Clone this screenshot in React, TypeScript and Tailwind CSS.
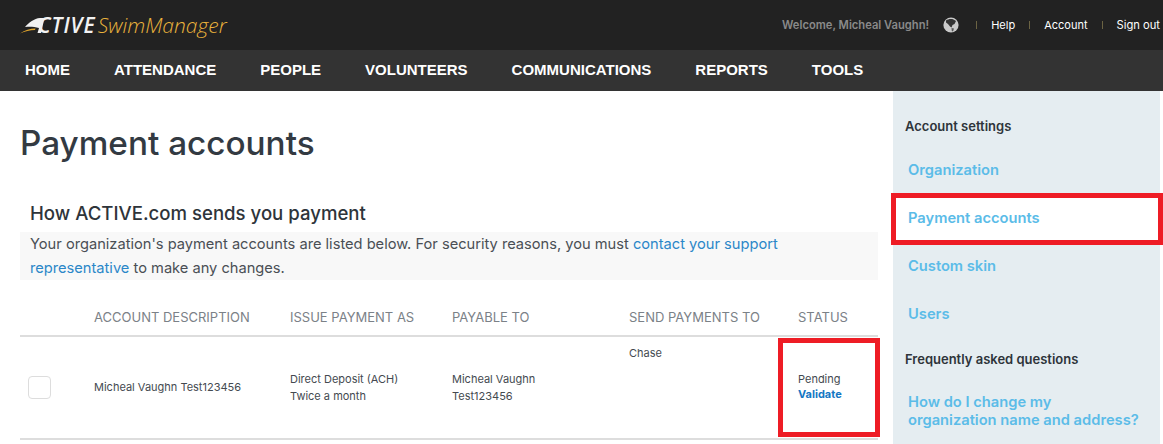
import React from "react";

const navItems = ["HOME", "ATTENDANCE", "PEOPLE", "VOLUNTEERS", "COMMUNICATIONS", "REPORTS", "TOOLS"];
const body = { fontFamily: '"Inter", "Liberation Sans", sans-serif' };

function Globe() {
  return (
    <svg width="16" height="16" viewBox="0 0 16 16" className="ml-[14px] mr-[17px]">
      <circle cx="8" cy="8" r="7.6" fill="#c9c9c9" />
      <path d="M3 3.5 C5 2 8 1.6 10.5 2.4 L13 4 L11.5 7 L9.5 8 L8.5 10.5 L7 9.5 L5 7 L3 5.5 Z" fill="#333" />
      <path d="M8.5 11 L11 11.5 L10 14.4 L8.8 14 Z" fill="#555" />
    </svg>
  );
}

function Logo() {
  return (
    <div className="relative flex h-[24px] w-[210px] items-center leading-none">
      <svg width="30" height="20" viewBox="0 0 30 20" className="absolute left-0 top-[2px]">
        <path d="M5 12 C9 7.5 14 3.5 20 3 L24.5 3 L21 18 L17.5 18 L19 13 C14 11.5 9 11.5 5 12 Z" fill="#f2f2f2" />
        <path d="M0 18.5 C5 15 10 13.5 15.5 13.5 L15 15 C10 15 5 16.5 0 18.5 Z" fill="#e0a42c" />
      </svg>
      <span className="ml-[18px] text-[21px] font-semibold italic tracking-[1px] text-[#f2f2f2]" style={{ fontFamily: '"Open Sans", sans-serif' }}>
        CTIVE
      </span>
      <span className="ml-[2px] text-[21px] font-light italic text-[#eab23c]" style={{ fontFamily: '"Open Sans", sans-serif' }}>
        SwimManager
      </span>
    </div>
  );
}

function SideLink({ children, active }: { children: React.ReactNode; active?: boolean }) {
  return (
    <a className={active ? "flex h-[48px] items-center bg-white pl-[15px] text-[14.7px] font-semibold text-[#5bbce8]" : "flex h-[48px] items-center pl-[15px] text-[14.7px] font-semibold text-[#5bbce8]"}>
      {children}
    </a>
  );
}

export default function App() {
  return (
    <div className="relative h-[444px] w-[1163px] overflow-hidden bg-white" style={body}>
      <header className="flex h-[50px] items-center justify-between bg-[#222222] pl-[20px] pr-[3px]">
        <Logo />
        <div className="flex items-center text-[11px] text-white">
          <span className="text-[11.2px] font-semibold text-[#8a8a8a]">Welcome, Micheal Vaughn!</span>
          <Globe />
          <span className="h-[8px] w-px bg-[#6b6343]" />
          <a className="mx-[14px]">Help</a>
          <span className="h-[8px] w-px bg-[#6b6343]" />
          <a className="mx-[14px]">Account</a>
          <span className="h-[8px] w-px bg-[#6b6343]" />
          <a className="ml-[14px] text-[11.2px]">Sign out</a>
        </div>
      </header>

      <nav className="flex h-[41px] items-center gap-[44px] bg-[#333333] pl-[25px] text-[15px] font-bold text-white" style={{ fontFamily: '"Liberation Sans", sans-serif' }}>
        {navItems.map((n) => (
          <a key={n}>{n}</a>
        ))}
      </nav>

      <div className="flex">
        <main className="w-[893px] pl-[20px] pr-[15px]">
          <h1 className="mt-[30px] text-[33.3px] font-medium leading-[44px] text-[#333a42]">Payment accounts</h1>
          <h2 className="mt-[36px] pl-[10px] text-[18.6px] font-medium leading-[24px] text-[#2e343a]">How ACTIVE.com sends you payment</h2>
          <div className="mt-[7px] h-[48px] bg-[#f8f8f8] pl-[10px] text-[14.65px] leading-[24px] text-[#4a4f55]">
            <p>
              Your organization's payment accounts are listed below. For security reasons, you must{" "}
              <a className="text-[#2b87c8]">contact your support</a>
            </p>
            <p>
              <a className="text-[#2b87c8]">representative</a> to make any changes.
            </p>
          </div>
          <div className="mt-[20px] grid h-[37px] grid-cols-[74px_196px_162px_177px_169px_80px] items-center border-b-2 border-[#dddddd] text-[13px] text-[#7b8187]">
            <span />
            <span>ACCOUNT DESCRIPTION</span>
            <span>ISSUE PAYMENT AS</span>
            <span>PAYABLE TO</span>
            <span>SEND PAYMENTS TO</span>
            <span>STATUS</span>
          </div>
          <div className="grid h-[103px] grid-cols-[74px_196px_162px_177px_169px_80px] items-center border-b-2 border-[#dddddd] text-[11px] leading-[17px] text-[#444a50]">
            <span className="ml-[8px] h-[23px] w-[23px] rounded-[4px] border border-[#dddddd] bg-white" />
            <span>Micheal Vaughn Test123456</span>
            <span>Direct Deposit (ACH)<br />Twice a month</span>
            <span>Micheal Vaughn<br />Test123456</span>
            <span className="mb-[69px]">Chase</span>
            <span className="mb-[2px] leading-[15px]">Pending<br /><a className="font-bold text-[#1477c4]">Validate</a></span>
          </div>
        </main>

        <aside className="h-[353px] w-[267px] bg-[#e5edf1] pt-[26px]">
          <h3 className="pl-[12px] text-[13px] font-semibold leading-[18px] text-[#2e343a]">Account settings</h3>
          <div className="mt-[11px]">
            <SideLink>Organization</SideLink>
            <SideLink active>Payment accounts</SideLink>
            <SideLink>Custom skin</SideLink>
            <SideLink>Users</SideLink>
          </div>
          <h3 className="mt-[12px] pl-[12px] text-[13px] font-semibold leading-[18px] text-[#2e343a]">Frequently asked questions</h3>
          <a className="mt-[25px] block pl-[15px] text-[14.7px] font-semibold leading-[18px] text-[#5bbce8]">
            How do I change my<br />organization name and address?
          </a>
        </aside>
      </div>

      <div className="pointer-events-none absolute left-[891px] top-[193px] h-[52px] w-[272px] border-[5px] border-[#ee1c25]" />
      <div className="pointer-events-none absolute left-[778px] top-[338px] h-[99px] w-[102px] border-[5px] border-[#ee1c25]" />
    </div>
  );
}
